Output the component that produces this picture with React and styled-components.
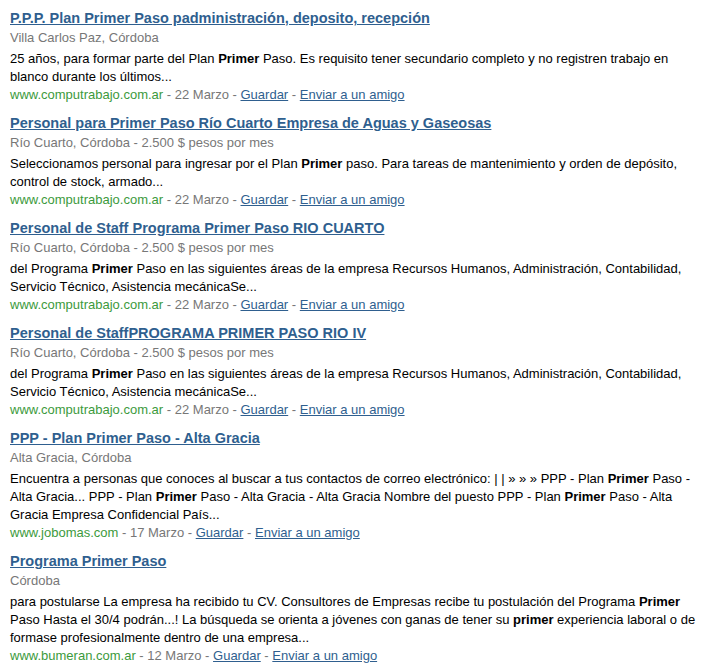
import React from "react"
import styled, { createGlobalStyle } from "styled-components"

const GlobalStyle = createGlobalStyle`
  body {
    margin: 0;
    background: #fff;
    font-family: "Liberation Sans", Arial, sans-serif;
  }
`

const results = [
  {
    title: "P.P.P. Plan Primer Paso padministración, deposito, recepción",
    place: "Villa Carlos Paz, Córdoba",
    text: [
      "25 años, para formar parte del Plan ",
      ["Primer"],
      " Paso. Es requisito tener secundario completo y no registren trabajo en blanco durante los últimos...",
    ],
    site: "www.computrabajo.com.ar",
    date: "22 Marzo",
  },
  {
    title: "Personal para Primer Paso Río Cuarto Empresa de Aguas y Gaseosas",
    place: "Río Cuarto, Córdoba - 2.500 $ pesos por mes",
    text: [
      "Seleccionamos personal para ingresar por el Plan ",
      ["Primer"],
      " paso. Para tareas de mantenimiento y orden de depósito, control de stock, armado...",
    ],
    site: "www.computrabajo.com.ar",
    date: "22 Marzo",
  },
  {
    title: "Personal de Staff Programa Primer Paso RIO CUARTO",
    place: "Río Cuarto, Córdoba - 2.500 $ pesos por mes",
    text: [
      "del Programa ",
      ["Primer"],
      " Paso en las siguientes áreas de la empresa Recursos Humanos, Administración, Contabilidad, Servicio Técnico, Asistencia mecánicaSe...",
    ],
    site: "www.computrabajo.com.ar",
    date: "22 Marzo",
  },
  {
    title: "Personal de StaffPROGRAMA PRIMER PASO RIO IV",
    place: "Río Cuarto, Córdoba - 2.500 $ pesos por mes",
    text: [
      "del Programa ",
      ["Primer"],
      " Paso en las siguientes áreas de la empresa Recursos Humanos, Administración, Contabilidad, Servicio Técnico, Asistencia mecánicaSe...",
    ],
    site: "www.computrabajo.com.ar",
    date: "22 Marzo",
  },
  {
    title: "PPP - Plan Primer Paso - Alta Gracia",
    place: "Alta Gracia, Córdoba",
    text: [
      "Encuentra a personas que conoces al buscar a tus contactos de correo electrónico: | | » » » PPP - Plan ",
      ["Primer"],
      " Paso - Alta Gracia... PPP - Plan ",
      ["Primer"],
      " Paso - Alta Gracia - Alta Gracia Nombre del puesto PPP - Plan ",
      ["Primer"],
      " Paso - Alta Gracia Empresa Confidencial País...",
    ],
    site: "www.jobomas.com",
    date: "17 Marzo",
  },
  {
    title: "Programa Primer Paso",
    place: "Córdoba",
    text: [
      "para postularse La empresa ha recibido tu CV. Consultores de Empresas recibe tu postulación del Programa ",
      ["Primer"],
      " Paso Hasta el 30/4 podrán...! La búsqueda se orienta a jóvenes con ganas de tener su ",
      ["primer"],
      " experiencia laboral o de formase profesionalmente dentro de una empresa...",
    ],
    site: "www.bumeran.com.ar",
    date: "12 Marzo",
  },
]

export default function App() {
  return (
    <>
      <GlobalStyle />
      <List>
        {results.map((r, i) => (
          <Result key={i}>
            <Title href="#">{r.title}</Title>
            <Place>{r.place}</Place>
            <Snippet>
              {r.text.map((part, j) =>
                Array.isArray(part) ? <b key={j}>{part[0]}</b> : part
              )}
            </Snippet>
            <Meta>
              <Site>{r.site}</Site> - {r.date} - <MetaLink href="#">Guardar</MetaLink> -{" "}
              <MetaLink href="#">Enviar a un amigo</MetaLink>
            </Meta>
          </Result>
        ))}
      </List>
    </>
  )
}

const List = styled.div`
  width: 695px;
  padding: 8px 0 0 10px;
`

const Result = styled.div`
  display: flex;
  flex-direction: column;
  align-items: flex-start;
  margin-bottom: 10.5px;
`

const Title = styled.a`
  font-size: 14.5px;
  font-weight: bold;
  line-height: 20px;
  color: #2f5f8f;
  text-decoration: underline;
`

const Place = styled.div`
  font-size: 13px;
  line-height: 20px;
  color: #777;
`

const Snippet = styled.div`
  font-size: 13px;
  line-height: 18px;
  color: #000;
  margin-top: 1.5px;

  b {
    font-weight: bold;
  }
`

const Meta = styled.div`
  font-size: 13px;
  line-height: 17px;
  color: #777;
`

const Site = styled.span`
  color: #3c9a3c;
`

const MetaLink = styled.a`
  color: #2f5f8f;
  text-decoration: underline;
`
